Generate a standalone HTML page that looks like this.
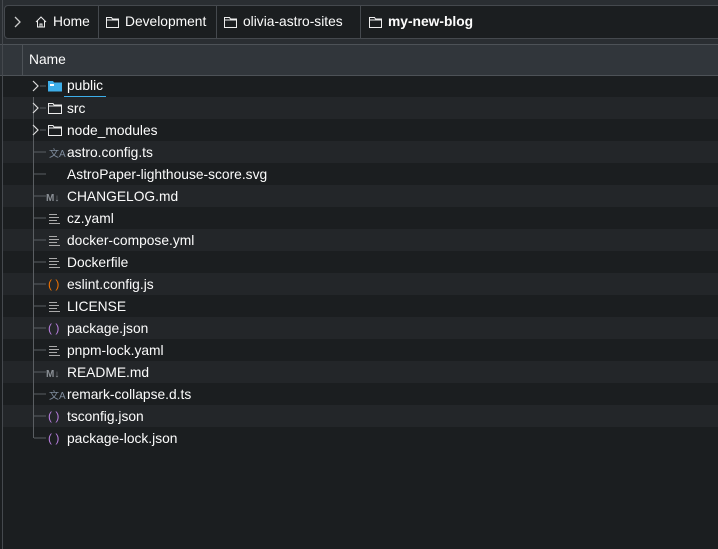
<!DOCTYPE html>
<html><head><style>
body{margin:0;width:718px;height:549px;background:#1b1e20;font-family:"Liberation Sans","DejaVu Sans",sans-serif;font-size:13.8px;color:#fcfcfc;position:relative;overflow:hidden}
.top{position:absolute;left:0;top:0;width:718px;height:44px;background:#2a2e32}
.bar{position:absolute;left:4px;top:5px;width:730px;height:32px;background:#1b1e20;border:1px solid #45494e;border-radius:4px}
.crumb{position:absolute;top:0;height:32px;line-height:32px;border-right:1px solid #45494e;font-size:13.8px}
.hdr{position:absolute;left:0;top:44px;width:718px;height:30px;background:#31363b;border-top:1px solid #4d5257;border-bottom:1px solid #4d5257}
.row{position:absolute;left:3px;width:715px;height:22px;line-height:22px}
.alt{background:#232629}
.vl{position:absolute;left:2px;top:0;width:1px;height:549px;background:#45494e}
.tree{position:absolute;left:33px;top:97px;width:1px;height:341px;background:#5a5e62}
svg{position:absolute}
</style></head><body>
<div class="top"></div>
<div class="bar">
<svg style="left:9px;top:10px" width="8" height="12"><path d="M1 1l5 5-5 5" stroke="#ccc" fill="none" stroke-width="1.3"/></svg>
<div class="crumb" style="left:23px;width:70px"><svg style="left:6px;top:9px" width="14" height="14"><path d="M2 7L7 2l5 5M3.5 6v6h7V6M6 12V9h2v3" stroke="#eee" fill="none"/></svg><span style="position:absolute;left:25px">Home</span></div>
<div class="crumb" style="left:94px;width:117px"><svg style="left:7px;top:10px" width="13" height="12"><path d="M.5 1.5h5l1 1.5h6v8.5H.5zM.5 4h12" stroke="#eee" fill="none"/></svg><span style="position:absolute;left:26px">Development</span></div>
<div class="crumb" style="left:212px;width:143px"><svg style="left:7px;top:10px" width="13" height="12"><path d="M.5 1.5h5l1 1.5h6v8.5H.5zM.5 4h12" stroke="#eee" fill="none"/></svg><span style="position:absolute;left:26px">olivia-astro-sites</span></div>
<div class="crumb" style="left:356px;width:400px;border:0"><svg style="left:8px;top:10px" width="13" height="12"><path d="M.5 1.5h5l1 1.5h6v8.5H.5zM.5 4h12" stroke="#eee" fill="none"/></svg><b style="position:absolute;left:27px">my-new-blog</b></div>
</div>
<div class="hdr"><div style="position:absolute;left:22px;top:0;width:1px;height:30px;background:#4d5257"></div><span style="position:absolute;left:29px;top:7px">Name</span></div>
<div class="vl"></div>
<div class="row" style="top:75px"></div>
<div class="row alt" style="top:97px"></div>
<div class="row" style="top:119px"></div>
<div class="row alt" style="top:141px"></div>
<div class="row" style="top:163px"></div>
<div class="row alt" style="top:185px"></div>
<div class="row" style="top:207px"></div>
<div class="row alt" style="top:229px"></div>
<div class="row" style="top:251px"></div>
<div class="row alt" style="top:273px"></div>
<div class="row" style="top:295px"></div>
<div class="row alt" style="top:317px"></div>
<div class="row" style="top:339px"></div>
<div class="row alt" style="top:361px"></div>
<div class="row" style="top:383px"></div>
<div class="row alt" style="top:405px"></div>
<div class="row" style="top:427px"></div>
<div class="tree"></div>
<div style="position:absolute;left:0;top:75px;width:718px">
<div style="position:absolute;left:64px;top:0;line-height:22px;border-bottom:1px solid #3daee9;height:21px;padding:0 3px;color:#fcfcfc">public</div>
</div>
<svg style="left:0;top:75px" width="718" height="374">
<g stroke="#5a5e62"><path d="M40 11h6M40 33h6M40 55h6M34 77h12M34 99h12M34 121h12M34 143h12M34 165h12M34 187h12M34 209h12M34 231h12M34 253h12M34 275h12M34 297h12M34 319h12M34 341h12M34 363h12"/></g>
<g stroke="#ddd" fill="none" stroke-width="1.2"><path d="M33 6l5 5-5 5M33 28l5 5-5 5M33 50l5 5-5 5"/></g>
<path d="M48 6h5l1 1.5h8v9H48z" fill="#3daee9"/><path d="M50 9h4v2h-4z" fill="#fff"/>
<g stroke="#eee" fill="none"><path d="M48.5 28.5h4.5l1 1.5h7.5v8.5H48.5zM48.5 31h13M48.5 50.5h4.5l1 1.5h7.5v8.5H48.5zM48.5 53h13"/></g>
<text x="49" y="82" fill="#7f8c9d" font-size="10">文A</text>
<text x="46" y="126" fill="#8a8f95" font-size="10" font-weight="bold">M↓</text>
<text x="46" y="302" fill="#8a8f95" font-size="10" font-weight="bold">M↓</text>
<text x="49" y="324" fill="#7f8c9d" font-size="10">文A</text>
<g stroke="#aaa"><path d="M49 139.5h8M49 142.5h10M49 145.5h8M49 148.5h11M49 161.5h8M49 164.5h10M49 167.5h8M49 170.5h11M49 183.5h8M49 186.5h10M49 189.5h8M49 192.5h11M49 227.5h8M49 230.5h10M49 233.5h8M49 236.5h11M49 271.5h8M49 274.5h10M49 277.5h8M49 280.5h11"/></g>
<g fill="#f67400" font-size="12"><text x="48" y="213">( )</text></g>
<g fill="#b97fe0" font-size="12"><text x="48" y="257">( )</text><text x="48" y="345">( )</text><text x="48" y="367">( )</text></g>
<g fill="#fcfcfc" font-size="13.8" font-family="Liberation Sans, sans-serif">
<text x="67" y="38">src</text><text x="67" y="60">node_modules</text><text x="67" y="82">astro.config.ts</text><text x="67" y="104">AstroPaper-lighthouse-score.svg</text><text x="67" y="126">CHANGELOG.md</text><text x="67" y="148">cz.yaml</text><text x="67" y="170">docker-compose.yml</text><text x="67" y="192">Dockerfile</text><text x="67" y="214">eslint.config.js</text><text x="67" y="236">LICENSE</text><text x="67" y="258">package.json</text><text x="67" y="280">pnpm-lock.yaml</text><text x="67" y="302">README.md</text><text x="67" y="324">remark-collapse.d.ts</text><text x="67" y="346">tsconfig.json</text><text x="67" y="368">package-lock.json</text>
</g>
</svg>
</body></html>
